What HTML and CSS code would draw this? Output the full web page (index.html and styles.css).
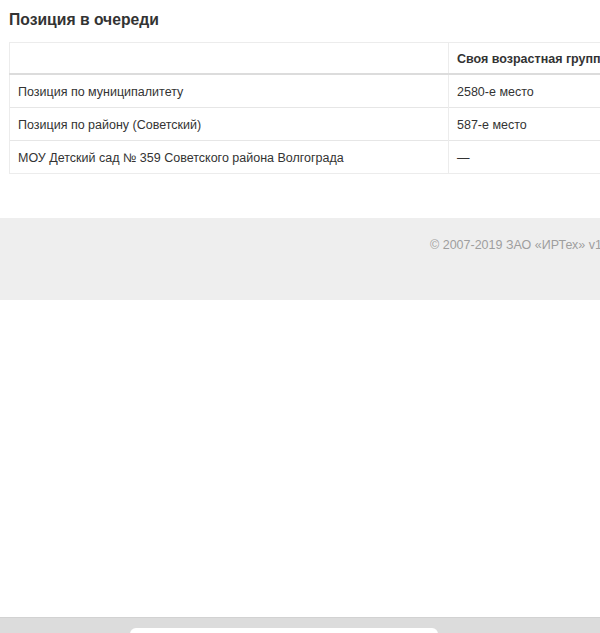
FILE: index.html
```html
<!DOCTYPE html>
<html lang="ru">
<head>
    <meta charset="UTF-8">
    <meta name="viewport" content="width=device-width, initial-scale=1.0">
    <title>Позиция в очереди</title>
    <link rel="stylesheet" href="styles.css">
</head>
<body>
    <div class="page">
        <div class="queue-section">
            <h2 class="section-title">Позиция в очереди</h2>

            <table class="queue-table">
                <thead>
                    <tr>
                        <th class="col-name"></th>
                        <th>Своя возрастная группа</th>
                    </tr>
                </thead>
                <tbody>
                    <tr>
                        <td>Позиция по муниципалитету</td>
                        <td>2580-е место</td>
                    </tr>
                    <tr>
                        <td>Позиция по району (Советский)</td>
                        <td>587-е место</td>
                    </tr>
                    <tr>
                        <td>МОУ Детский сад № 359 Советского района Волгограда</td>
                        <td>—</td>
                    </tr>
                </tbody>
            </table>
        </div>

        <footer class="site-footer">
            <p class="copyright">© 2007-2019 ЗАО «ИРТех» v1.0</p>
        </footer>
    </div>

    <!-- browser toolbar at the bottom of the screen -->
    <div class="toolbar">
        <div class="address-bar"></div>
    </div>
</body>
</html>
```

FILE: styles.css
```css
html, body {
    margin: 0;
    padding: 0;
    overflow: hidden;
}

body {
    font-family: "Liberation Sans", Arial, sans-serif;
    font-size: 12.5px;
    line-height: 16px;
    color: #333;
    background: #fff;
}

/* Page is wider than the screen, right side is cut off */
.page {
    width: 1040px;
}

.queue-section {
    padding: 10px 9px 44px;
}

.section-title {
    margin: 0 0 13px;
    font-size: 15.7px;
    line-height: 19px;
    font-weight: bold;
    color: #333;
}

/* Table */
.queue-table {
    width: 900px;
    border-collapse: collapse;
    border: 1px solid #ececec;
}

.queue-table th,
.queue-table td {
    padding: 9px 8px 7px;
    text-align: left;
    vertical-align: middle;
    border-left: 1px solid #ececec;
}

.queue-table th {
    height: 14px;
    line-height: 14px;
    font-weight: bold;
    border-bottom: 2px solid #dcdcdc;
}

.queue-table td {
    border-top: 1px solid #e6e6e6;
}

.queue-table .col-name {
    width: 422px;
}

/* Footer */
.site-footer {
    height: 82px;
    background-color: #eeeeee;
}

.copyright {
    margin: 0;
    padding: 19px 0 0 430px;
    color: #9e9e9e;
}

/* Bottom toolbar */
.toolbar {
    position: fixed;
    left: 0;
    right: 0;
    bottom: 0;
    height: 15px;
    background-color: #dcdcdc;
    border-top: 1px solid #d2d2d2;
}

.address-bar {
    margin: 10px 0 0 130px;
    width: 308px;
    height: 12px;
    background-color: #fff;
    border-radius: 6px;
}
```
